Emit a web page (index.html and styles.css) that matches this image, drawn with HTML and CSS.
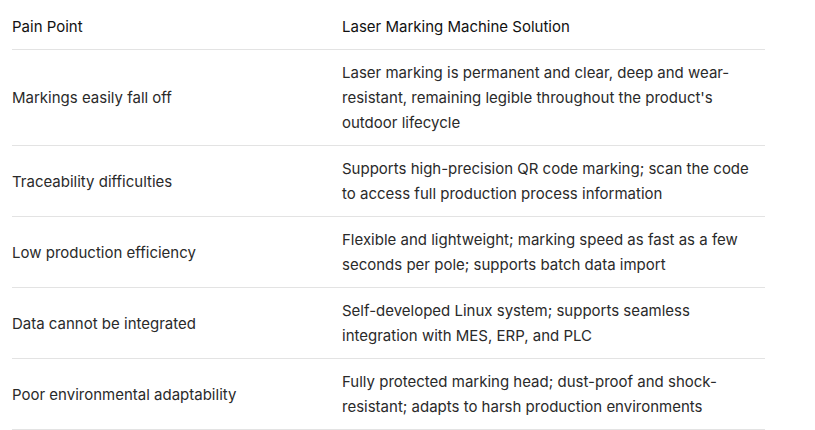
FILE: index.html
```html
<!DOCTYPE html>
<html lang="en">
<head>
<meta charset="utf-8">
<title>Pain Points</title>
<link rel="stylesheet" href="styles.css">
</head>
<body>
<table class="compare">
  <thead>
    <tr>
      <th class="col-pain">Pain Point</th>
      <th class="col-sol">Laser Marking Machine Solution</th>
    </tr>
  </thead>
  <tbody>
    <tr>
      <td class="col-pain">Markings easily fall off</td>
      <td class="col-sol">Laser marking is permanent and clear, deep and wear-resistant, remaining legible throughout the product's outdoor lifecycle</td>
    </tr>
    <tr>
      <td class="col-pain">Traceability difficulties</td>
      <td class="col-sol">Supports high-precision QR code marking; scan the code to access full production process information</td>
    </tr>
    <tr>
      <td class="col-pain">Low production efficiency</td>
      <td class="col-sol">Flexible and lightweight; marking speed as fast as a few seconds per pole; supports batch data import</td>
    </tr>
    <tr>
      <td class="col-pain">Data cannot be integrated</td>
      <td class="col-sol">Self-developed Linux system; supports seamless integration with MES, ERP, and PLC</td>
    </tr>
    <tr>
      <td class="col-pain">Poor environmental adaptability</td>
      <td class="col-sol">Fully protected marking head; dust-proof and shock-resistant; adapts to harsh production environments</td>
    </tr>
  </tbody>
</table>
</body>
</html>
```

FILE: styles.css
```css
html, body {
  margin: 0;
  padding: 0;
  background: #ffffff;
}

body {
  font-family: Inter, "Noto Sans", sans-serif;
  font-size: 15px;
  color: #2a2a2a;
  padding: 4px 0 0 12px;
}

.compare {
  border-collapse: collapse;
  table-layout: fixed;
  width: 753px;
}

.compare th,
.compare td {
  text-align: left;
  vertical-align: middle;
  line-height: 25px;
  padding: 10px 16px 10px 0;
  border-bottom: 1px solid #e3e3e3;
}

.compare th {
  font-weight: 400;
  color: #111111;
}

.col-pain {
  width: 314px;
}
```
